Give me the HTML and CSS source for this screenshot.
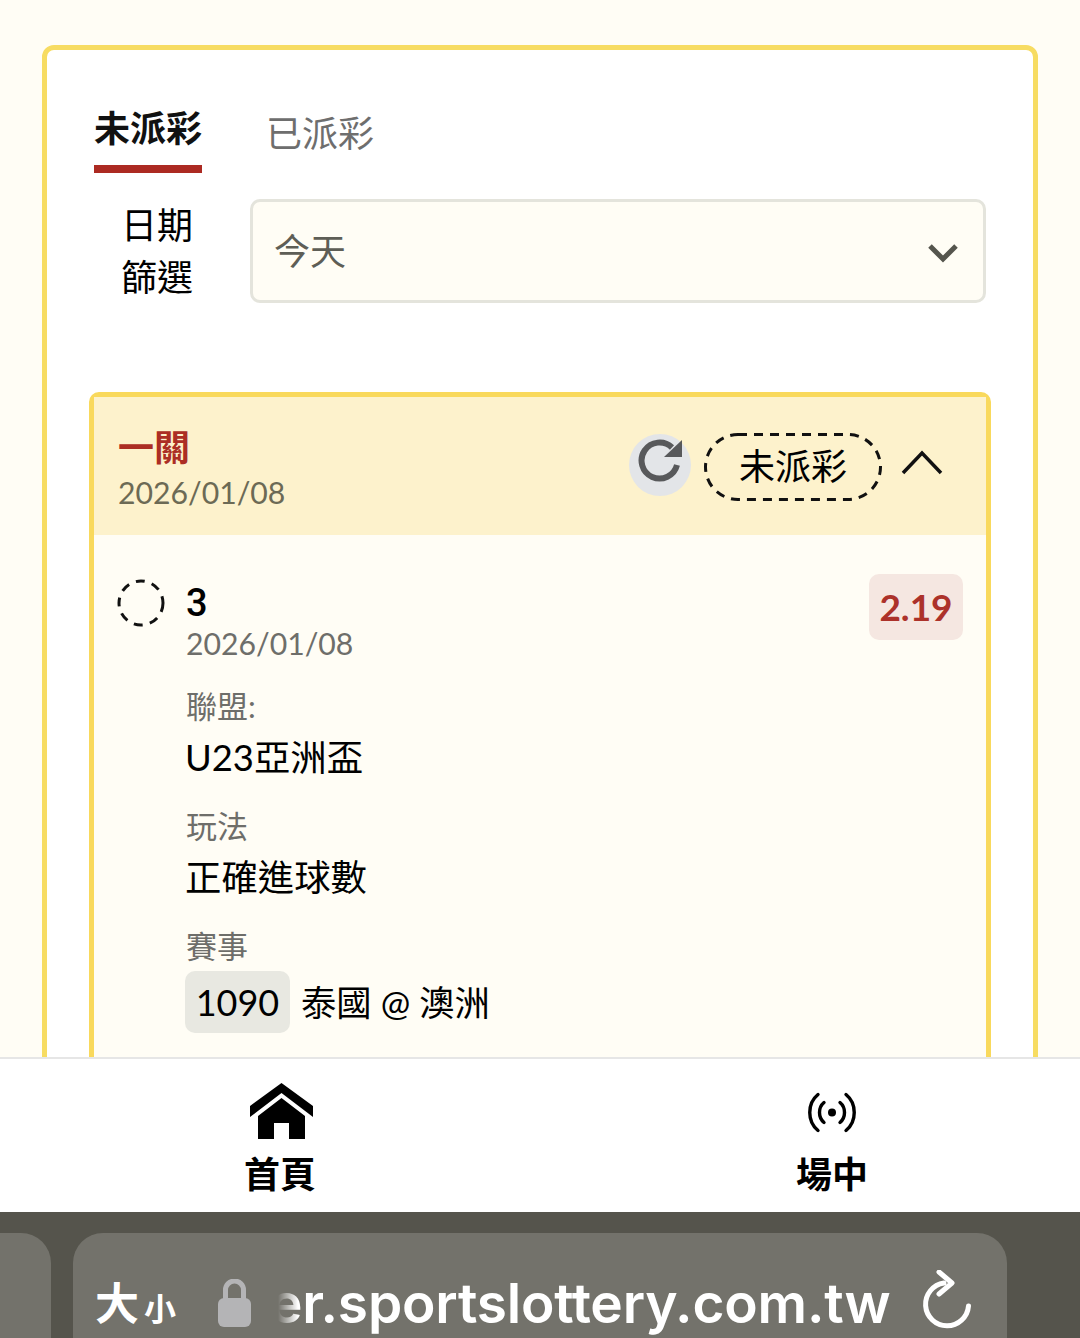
FILE: index.html
```html
<!DOCTYPE html>
<html lang="zh-Hant">
    <head>
        <meta charset="utf-8">
        <title>未派彩</title>
        <link rel="stylesheet" href="styles.css">
    </head>
    <body>
        <main class="page">
            <section class="panel">
                <div class="tabs">
                    <div class="tab active">未派彩</div>
                    <div class="tab">已派彩</div>
                </div>

                <div class="filter">
                    <div class="filter-label">日期<br>篩選</div>
                    <div class="select">
                        <span>今天</span>
                        <svg class="select-arrow" viewBox="0 0 32 20" width="32" height="20">
                            <path d="M3 3 L16 16 L29 3" fill="none" stroke="#55554d" stroke-width="5"/>
                        </svg>
                    </div>
                </div>

                <div class="bet">
                    <div class="bet-head">
                        <div class="bet-title">
                            <div class="bet-type">一關</div>
                            <div class="bet-date">2026/01/08</div>
                        </div>
                        <div class="bet-actions">
                            <div class="refresh">
                                <svg viewBox="0 0 48 46" width="48" height="46">
                                    <path d="M35 9.5 A18 18 0 1 0 40 27" fill="none" stroke="#58595b" stroke-width="6"/>
                                    <path d="M45 2 V19 H27 Z" fill="#58595b"/>
                                </svg>
                            </div>
                            <div class="pill">
                                <svg class="pill-line" width="178" height="68" viewBox="0 0 178 68">
                                    <rect x="1.5" y="1.5" width="175" height="65" rx="32.5" fill="none" stroke="#111" stroke-width="3" stroke-dasharray="9 7"/>
                                </svg>
                                未派彩
                            </div>
                            <svg class="chevron" viewBox="0 0 42 26" width="42" height="26">
                                <path d="M2 24 L21 4 L40 24" fill="none" stroke="#111" stroke-width="3.5"/>
                            </svg>
                        </div>
                    </div>

                    <div class="bet-body">
                        <svg class="status-dot" viewBox="0 0 48 48" width="48" height="48">
                            <circle cx="24" cy="24" r="22" fill="none" stroke="#111" stroke-width="3" stroke-dasharray="9 7.3"/>
                        </svg>
                        <div class="bet-info">
                            <div class="pick">3</div>
                            <div class="pick-date">2026/01/08</div>
                            <div class="field-label">聯盟:</div>
                            <div class="field-value">U23亞洲盃</div>
                            <div class="field-label">玩法</div>
                            <div class="field-value">正確進球數</div>
                            <div class="field-label">賽事</div>
                            <div class="match">
                                <span class="match-no">1090</span>
                                <span class="match-name">泰國 @ 澳洲</span>
                            </div>
                        </div>
                        <div class="odds">2.19</div>
                    </div>
                </div>
            </section>
        </main>

        <nav class="bottom-nav">
            <div class="nav-item">
                <svg class="home-icon" viewBox="0 0 63 57" width="63" height="57">
                    <path d="M31.5 0 L63 23 V34 L31.5 10 L0 34 V23 Z" fill="#000"/>
                    <path d="M31.5 15 L55 33 V56 H39 V40 H24 V56 H8 V33 Z" fill="#000"/>
                </svg>
                <span>首頁</span>
            </div>
            <div class="nav-item">
                <svg class="live-icon" viewBox="0 0 50 40" width="50" height="57">
                    <path d="M11 2 C0 11 0 29 11 38" fill="none" stroke="#000" stroke-width="3.4" stroke-linecap="round"/>
                    <path d="M39 2 C50 11 50 29 39 38" fill="none" stroke="#000" stroke-width="3.4" stroke-linecap="round"/>
                    <path d="M17 10 C11 15 11 25 17 30" fill="none" stroke="#000" stroke-width="3.4" stroke-linecap="round"/>
                    <path d="M33 10 C39 15 39 25 33 30" fill="none" stroke="#000" stroke-width="3.4" stroke-linecap="round"/>
                    <circle cx="25" cy="20" r="4" fill="#000"/>
                </svg>
                <span>場中</span>
            </div>
        </nav>

        <footer class="browser-bar">
            <div class="prev-tab"></div>
            <div class="address">
                <span class="size-big">大</span><span class="size-small">小</span>
                <svg class="lock" viewBox="0 0 33 48" width="33" height="48">
                    <path d="M7.5 20 V11 A9 9 0 0 1 25.5 11 V20" fill="none" stroke="#b4b4b6" stroke-width="5"/>
                    <rect x="0" y="19" width="33" height="29" rx="6" fill="#b4b4b6"/>
                </svg>
                <span class="url">er.sportslottery.com.tw</span>
                <svg class="reload" viewBox="0 0 50 60" width="50" height="60">
                    <path d="M22 13 A21.5 21.5 0 1 0 46.5 36" fill="none" stroke="#fff" stroke-width="5" stroke-linecap="round"/>
                    <path d="M17 2 L30 13 L17 24" fill="none" stroke="#fff" stroke-width="5" stroke-linecap="round" stroke-linejoin="round"/>
                </svg>
            </div>
        </footer>
    </body>
</html>
```

FILE: styles.css
```css
* {
    box-sizing: border-box;
}

html, body {
    margin: 0;
    padding: 0;
}

body {
    width: 1080px;
    height: 1338px;
    overflow: hidden;
    font-family: Lato, "Noto Sans CJK TC", sans-serif;
    color: #000;
    background: #fffdf5;
}

.page {
    height: 1057px;
    padding: 45px 42px 0;
    overflow: hidden;
}

.panel {
    height: 1100px;
    padding: 45px 42px 0 46px;
    background: #fff;
    border: 5px solid #f7dc62;
    border-radius: 12px;
}

.tabs {
    display: flex;
    gap: 64px;
    margin-left: 1px;
}

.tab {
    height: 78px;
    padding-top: 5px;
    font-size: 36px;
    line-height: 66px;
    color: #6e6e6e;
}

.tab.active {
    padding-top: 0;
    font-weight: 700;
    color: #111;
    border-bottom: 8px solid #ac2a22;
}

.filter {
    display: flex;
    align-items: center;
    margin-top: 26px;
}

.filter-label {
    flex: none;
    width: 128px;
    font-size: 36px;
    line-height: 52px;
    text-align: center;
}

.select {
    width: 736px;
    height: 104px;
    margin-left: 29px;
    padding: 0 24px 4px 21px;
    display: flex;
    align-items: center;
    justify-content: space-between;
    font-size: 36px;
    color: #5e5e56;
    background: #fffdf5;
    border: 3px solid #e4e4dc;
    border-radius: 10px;
}

.select-arrow {
    margin-top: 8px;
}

.bet {
    width: 902px;
    min-height: 800px;
    margin-top: 89px;
    margin-left: -4px;
    background: #fffdf5;
    border: 5px solid #f9d95c;
    border-radius: 10px;
}

.bet-head {
    height: 138px;
    padding: 0 43px 0 24px;
    display: flex;
    align-items: center;
    justify-content: space-between;
    background: #fdf2cc;
}

.bet-title {
    margin-top: 6px;
}

.bet-type {
    font-size: 36px;
    font-weight: 700;
    line-height: 46px;
    color: #ac2e24;
}

.bet-date {
    font-size: 30.2px;
    line-height: 44px;
    color: #6c6a55;
}

.bet-actions {
    display: flex;
    align-items: center;
    margin-top: 2px;
}

.refresh {
    width: 62px;
    height: 62px;
    margin-top: -4px;
    margin-right: 13px;
    padding: 4px 0 0 8px;
    background: #e3e5e8;
    border-radius: 50%;
}

.refresh svg, .lock, .reload, .nav-item svg {
    display: block;
}

.pill {
    position: relative;
    width: 178px;
    height: 68px;
    font-size: 36px;
    line-height: 66px;
    text-align: center;
}

.pill-line {
    position: absolute;
    top: 0;
    left: 0;
}

.chevron {
    margin-left: 19px;
    margin-top: -10px;
}

.bet-body {
    display: flex;
    align-items: flex-start;
    padding: 39px 23px 0 23px;
}

.status-dot {
    flex: none;
    margin-top: 5px;
}

.bet-info {
    flex: 1;
    margin-left: 21px;
}

.pick {
    margin-top: 7px;
    font-family: Roboto, sans-serif;
    font-size: 38px;
    font-weight: 500;
    line-height: 45px;
}

.pick-date {
    margin-top: -1px;
    font-size: 30.2px;
    line-height: 36px;
    color: #6e6e6a;
}

.field-label {
    margin-top: 25px;
    font-size: 31px;
    line-height: 41px;
    color: #6e6e6a;
}

.field-value {
    margin-left: -1px;
    font-size: 36.4px;
    line-height: 60px;
}

.field-value + .field-label {
    margin-top: 19px;
}

.match {
    display: flex;
    align-items: center;
    gap: 11px;
    margin-top: 4px;
    margin-left: -1px;
    font-size: 35.3px;
}

.match-no {
    width: 105px;
    height: 62px;
    line-height: 62px;
    text-align: center;
    font-size: 36px;
    background: #e8e8e1;
    border-radius: 10px;
}

.match-name {
    margin-top: -4px;
}

.odds {
    width: 94px;
    height: 66px;
    line-height: 66px;
    text-align: center;
    font-size: 37px;
    font-weight: 700;
    color: #ac322a;
    background: #f5e7e1;
    border-radius: 10px;
}

.bottom-nav {
    height: 155px;
    padding: 24px 178px 0 210px;
    display: flex;
    justify-content: space-between;
    background: #fff;
    border-top: 2px solid #e6e6e6;
}

.nav-item {
    width: 140px;
    display: flex;
    flex-direction: column;
    align-items: center;
    font-size: 36px;
    font-weight: 700;
    color: #000;
}

.nav-item span {
    margin-top: 11px;
    line-height: 46px;
}

.nav-item .home-icon {
    margin-left: 2px;
}

.nav-item .live-icon {
    margin-top: 1px;
    margin-bottom: -1px;
}

.browser-bar {
    height: 126px;
    padding-top: 21px;
    display: flex;
    gap: 22px;
    overflow: hidden;
    background: #55544c;
}

.prev-tab {
    width: 51px;
    height: 120px;
    background: #73726b;
    border-radius: 0 30px 0 0;
}

.address {
    width: 934px;
    height: 120px;
    padding: 37px 35px 0 22px;
    display: flex;
    align-items: flex-start;
    color: #fff;
    background: #73726b;
    border-radius: 30px 30px 0 0;
}

.size-big {
    margin-top: -2px;
    font-size: 44px;
    font-weight: 700;
    line-height: 70px;
}

.size-small {
    margin-top: 4px;
    margin-left: 5px;
    font-size: 32px;
    font-weight: 700;
    line-height: 70px;
}

.lock {
    flex: none;
    margin: 9px 0 0 42px;
}

.url {
    flex: none;
    margin-top: -2px;
    margin-left: 19px;
    font-family: Inter, sans-serif;
    font-size: 55px;
    font-weight: 600;
    line-height: 70px;
    letter-spacing: -0.2px;
    -webkit-mask-image: linear-gradient(to right, transparent 8px, #000 28px);
    mask-image: linear-gradient(to right, transparent 8px, #000 28px);
}

.reload {
    flex: none;
    margin: 0 0 0 auto;
}
```
